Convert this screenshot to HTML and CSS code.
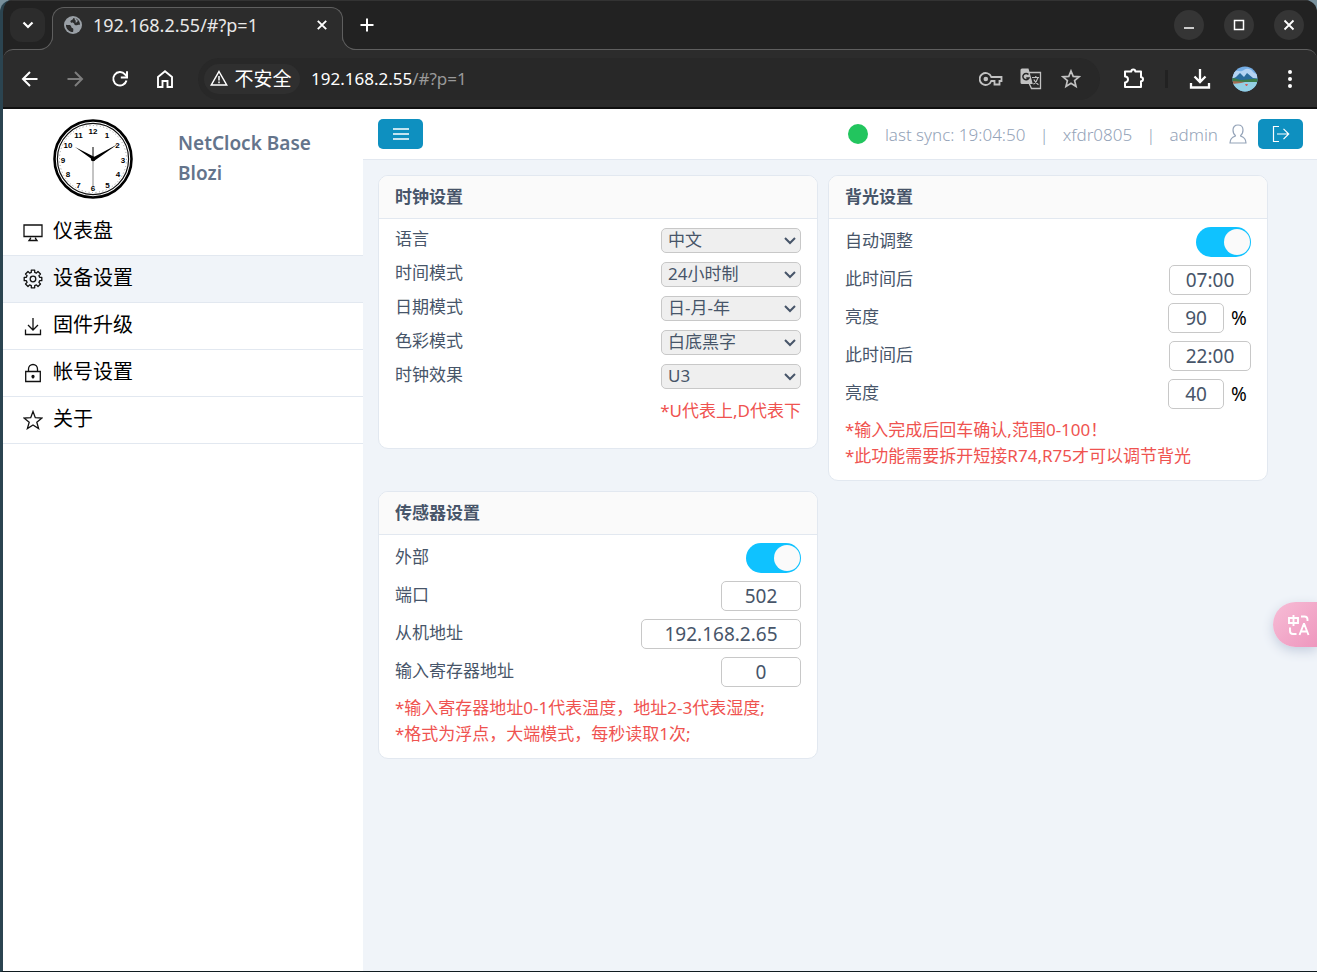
FILE: index.html
```html
<!DOCTYPE html>
<html lang="zh-CN">
<head>
<meta charset="utf-8">
<title>NetClock Base</title>
<link rel="stylesheet" href="styles.css">
</head>
<body>
<div class="window">
  <header class="tabstrip">
    <button class="tab-search" aria-label="搜索标签页"><svg width="12" height="8" viewBox="0 0 12 8"><path d="M1.500 1.500 6 6l4.500-4.500" fill="none" stroke="#fff" stroke-width="2.200"/></svg></button>
    <div class="tab">
      <svg width="18" height="18" viewBox="0 0 18 18"><circle cx="9" cy="9" r="9" fill="#9aa0a6"/><path d="M2 8.700c2 .7 3.400-.2 4.600.9 1.100 1 .2 1.900 1.600 2.300 1.100.3 1.300 1 1.100 2.100-.1.700-.1 1.400-.2 2C5 16 1.700 12.600 2 8.700zM9.600 2c-1.200.9-.6 1.700-1.900 2.100-1.400.4-1.700 1.300-.8 2.400.8.900 2.600 0 3.200 1 .5.900.3 1.700 1.500 1.800 1.600.2 2.300-.7 4.400-.5C16 4.800 13.200 2.100 9.600 2z" fill="#2c2c2c"/><path d="M10.800 2.300c.8.700.6 1.700 1.600 2 .9.300.5 1.500-.8 1.600" fill="none" stroke="#9aa0a6" stroke-width="1.500"/></svg>
      <span class="tab-title">192.168.2.55/#?p=1</span>
      <button class="tab-close" aria-label="关闭标签页"><svg width="10" height="10" viewBox="0 0 10 10"><path d="M.8.800l8.400 8.400M9.200.8.800 9.200" stroke="#fff" stroke-width="1.900"/></svg></button>
    </div>
    <button class="new-tab" aria-label="新标签页"><svg width="14" height="14" viewBox="0 0 14 14"><path d="M7 .5v13M.5 7h13" stroke="#fff" stroke-width="2"/></svg></button>
    <div class="controls">
      <button aria-label="最小化"><svg width="12" height="12" viewBox="0 0 12 12"><path d="M1 9h10" stroke="#fff" stroke-width="1.500"/></svg></button>
      <button aria-label="最大化"><svg width="12" height="12" viewBox="0 0 12 12"><path d="M1.500 1.500h9v9h-9z" fill="none" stroke="#fff" stroke-width="1.500"/></svg></button>
      <button aria-label="关闭"><svg width="12" height="12" viewBox="0 0 12 12"><path d="m1.500 1.500 9 9m0-9-9 9" stroke="#fff" stroke-width="1.800"/></svg></button>
    </div>
  </header>

  <nav class="toolbar">
    <button aria-label="后退"><svg width="18" height="18" viewBox="0 0 18 18"><path d="M16.500 9H2.500M9 2 2 9l7 7" fill="none" stroke="#fff" stroke-width="2"/></svg></button>
    <button aria-label="前进"><svg width="18" height="18" viewBox="0 0 18 18"><path d="M1.500 9h14M9 2l7 7-7 7" fill="none" stroke="#7d7d7d" stroke-width="2"/></svg></button>
    <button aria-label="重新加载"><svg width="18" height="18" viewBox="0 0 18 18"><path d="M15.500 10.500A6.700 6.700 0 1 1 14 4.300l1.500 1.700" fill="none" stroke="#fff" stroke-width="2"/><path d="M16 1.200v6.300H9.800" fill="none" stroke="#fff" stroke-width="2"/></svg></button>
    <button aria-label="主页"><svg width="18" height="20" viewBox="0 0 18 20"><path d="M2 8 9 2.300 16 8v10h-4.500v-6h-5v6H2z" fill="none" stroke="#fff" stroke-width="1.900"/></svg></button>
    <div class="urlbar">
      <button class="chip"><svg width="18" height="16" viewBox="0 0 18 16"><path d="M9 1.500 16.700 15H1.300z" fill="none" stroke="#fff" stroke-width="1.500"/><path d="M9 6v4.500M9 11.500v1.800" stroke="#fff" stroke-width="1.500"/></svg>不安全</button>
      <span class="url">192.168.2.55<span class="dim">/#?p=1</span></span>
      <button aria-label="密码"><svg width="24" height="14" viewBox="0 0 24 14"><path d="M12.300 5A6 6 0 1 0 12.300 9H15.500v3.500h5V9h2V5z" fill="none" stroke="#c2c2c2" stroke-width="1.800"/><circle cx="6.800" cy="7" r="2.300" fill="#c2c2c2"/></svg></button>
      <button aria-label="翻译"><svg width="22" height="22" viewBox="0 0 22 22"><path d="M9 4.500h11.500v16h-9L9 15" fill="none" stroke="#c2c2c2" stroke-width="1.300"/><path d="M2 .5h6.500l4.300 15.500H2A1.500 1.500 0 0 1 .5 14.500V2A1.500 1.500 0 0 1 2 .5z" fill="#c2c2c2"/><path d="M8.500 6.500a3.200 3.200 0 1 0 .4 3.600H6.200" fill="none" stroke="#282828" stroke-width="1.500"/><path d="M12 9.500h7M15.800 8v1.500M18 9.700c-.8 3-2.700 5.300-4.500 6.500M13.800 11.500c1.200 2.300 2.700 4 4.700 5.300" fill="none" stroke="#c2c2c2" stroke-width="1.200"/></svg></button>
      <button aria-label="收藏"><svg width="20" height="20" viewBox="0 0 20 20"><path d="m10 2 2.200 5.400 5.900.4-4.500 3.800 1.400 5.800-5-3.200-5 3.200 1.400-5.800-4.500-3.800 5.900-.4z" fill="none" stroke="#c2c2c2" stroke-width="1.700"/></svg></button>
    </div>
    <button aria-label="扩展程序"><svg width="22" height="22" viewBox="0 0 22 22"><path d="M2 3.500h6.300a2 2 0 0 1 4 0H18v5.800a2 2 0 0 1 0 4V19H2v-4.600a3 3 0 0 0 0-6z" fill="none" stroke="#fff" stroke-width="2" stroke-linejoin="round"/></svg></button>
    <span class="divider"></span>
    <button aria-label="下载"><svg width="22" height="22" viewBox="0 0 22 22"><path d="M11 1v12.500M5.500 8.500 11 14l5.500-5.500M2 15v4.500h18V15" fill="none" stroke="#fff" stroke-width="2.300"/></svg></button>
    <button aria-label="个人资料"><svg width="26" height="26" viewBox="0 0 26 26"><defs><clipPath id="av"><circle cx="13" cy="13" r="12.500"/></clipPath></defs><g clip-path="url(#av)"><path d="M0 0h26v26H0z" fill="#75aee6"/><path d="M2 6c3-3 5 0 8-1s3-3 7-2 3 4 8 5v4H0z" fill="#b4d3f3"/><path d="m0 13 4-2 4-4 4 4 3-4 6 5 5 1v4H0z" fill="#2b6c9c"/><path d="M0 12c4 0 6 2 10 2s11-2 16-1v3H0z" fill="#3b7c4a"/><path d="M0 16h26v10H0z" fill="#93d0e4"/><path d="m0 15 13 1-4 1-9 1z" fill="#a56b50"/><path d="M13 18h3l-1 2h-1z" fill="#d0605b"/></g></svg></button>
    <button aria-label="菜单"><svg width="6" height="20" viewBox="0 0 6 20"><g fill="#fff"><circle cx="3" cy="3" r="2"/><circle cx="3" cy="10" r="2"/><circle cx="3" cy="17" r="2"/></g></svg></button>
  </nav>

  <div class="app">
    <aside class="sidebar">
      <div class="brand">
        <svg class="clock" width="80" height="80" viewBox="0 0 80 80">
          <circle cx="40" cy="40" r="38.500" fill="#fff" stroke="#000" stroke-width="2.600"/>
          <circle cx="40" cy="40" r="35.600" fill="none" stroke="#111" stroke-width="1.200"/>
          <circle cx="40" cy="40" r="33.500" fill="none" stroke="#999" stroke-width="1" stroke-dasharray="1 2.500"/>
          <g class="numerals"><text x="40" y="15">12</text><text x="54" y="19">1</text><text x="64.500" y="29">2</text><text x="70" y="44">3</text><text x="65" y="58">4</text><text x="54.500" y="69">5</text><text x="40" y="72">6</text><text x="25.500" y="69">7</text><text x="15" y="58">8</text><text x="10" y="44">9</text><text x="15" y="29">10</text><text x="25.500" y="19">11</text></g>
          <path d="M40 28v10" stroke="#000" stroke-width="1"/><path d="M40 40v27" stroke="#888" stroke-width="1"/>
          <path d="m22 28 19.500 10-1.500 3zM65 25 41 42l-2-3z"/><circle cx="40" cy="40" r="2.200"/>
        </svg>
        <h1>NetClock Base<br>Blozi</h1>
      </div>
      <nav class="menu">
        <a href="#0"><svg width="20" height="20" viewBox="0 0 20 20"><path d="M1 3h18v11.500H1z"/><path d="M7.500 15.500v1L6 18.500h8l-1.500-2v-1"/></svg>仪表盘</a>
        <a href="#1" class="active"><svg width="20" height="20" viewBox="0 0 20 20"><path d="M8.300 1.200h3.400v2.200l1.700.7L15 2.500 17.500 5l-1.600 1.600.7 1.700h2.200v3.400h-2.200l-.7 1.700 1.600 1.600-2.500 2.500-1.600-1.600-1.700.7v2.200H8.300v-2.200l-1.700-.7L5 17.500 2.500 15l1.600-1.600-.7-1.700H1.200V8.300h2.200l.7-1.700L2.500 5 5 2.500l1.600 1.600 1.700-.7z" stroke-linejoin="round"/><circle cx="10" cy="10" r="2.800"/></svg>设备设置</a>
        <a href="#2"><svg width="20" height="20" viewBox="0 0 20 20"><path d="M10 2v12M5 9l5 5 5-5M2.500 13.500v5h15v-5"/></svg>固件升级</a>
        <a href="#3"><svg width="20" height="20" viewBox="0 0 20 20"><path d="M2.700 8.500h14.600v10H2.700zM5.500 8.500V6a4.500 4.500 0 0 1 9 0v2.500"/><circle cx="10" cy="13.500" r="1" fill="#000"/><path d="M10 12v3.500"/></svg>帐号设置</a>
        <a href="#4"><svg width="20" height="20" viewBox="0 0 20 20"><path d="m10 1.500 2.300 6.200 6.700.3-5.200 4.200 1.800 6.400-5.600-3.600-5.600 3.600 1.800-6.400L1 8l6.700-.3z"/></svg>关于</a>
      </nav>
    </aside>

    <main class="main">
      <div class="topbar">
        <button class="btn" aria-label="切换菜单"><svg width="16" height="14" viewBox="0 0 16 14"><path d="M0 2h16M0 7h16M0 12h16" stroke="#fff" stroke-width="1.300"/></svg></button>
        <div class="status">
          <span class="dot"></span>
          <span>last sync: 19:04:50</span><span>|</span><span>xfdr0805</span><span>|</span>
          <span class="user">admin<svg width="18" height="20" viewBox="0 0 18 20"><path d="M6.800 12C4.500 10.500 4 8.500 4 6c0-3 2-5 5-5s5 2 5 5c0 2.500-.5 4.500-2.800 6M6.800 12C3 13 1 14.500 1 19h16c0-4.500-2-6-5.800-7" fill="none" stroke="#94a3b8" stroke-width="1.200"/></svg></span>
        </div>
        <button class="btn" aria-label="退出登录"><svg width="18" height="18" viewBox="0 0 18 18"><path d="M7 1.500H1.500v15H7M5 9h11.500M11.500 3.800 16.700 9l-5.200 5.200" fill="none" stroke="#fff" stroke-width="1.200"/></svg></button>
      </div>

      <div class="cards">
        <section class="card">
          <h2>时钟设置</h2>
          <div class="body compact">
            <div class="row"><label for="lang">语言</label><select id="lang"><option>中文</option></select></div>
            <div class="row"><label for="hour">时间模式</label><select id="hour"><option>24小时制</option></select></div>
            <div class="row"><label for="date">日期模式</label><select id="date"><option>日-月-年</option></select></div>
            <div class="row"><label for="color">色彩模式</label><select id="color"><option>白底黑字</option></select></div>
            <div class="row"><label for="effect">时钟效果</label><select id="effect"><option>U3</option></select></div>
            <p class="note right">*U代表上,D代表下</p>
          </div>
        </section>

        <section class="card">
          <h2>背光设置</h2>
          <div class="body">
            <div class="row"><label for="auto">自动调整</label><input class="switch" id="auto" type="checkbox" checked></div>
            <div class="row"><label for="t1">此时间后</label><input class="field time" id="t1" type="text" value="07:00"></div>
            <div class="row"><label for="b1">亮度</label><span class="percent"><input class="field short" id="b1" type="text" value="90">%</span></div>
            <div class="row"><label for="t2">此时间后</label><input class="field time" id="t2" type="text" value="22:00"></div>
            <div class="row"><label for="b2">亮度</label><span class="percent"><input class="field short" id="b2" type="text" value="40">%</span></div>
            <p class="note">*输入完成后回车确认,范围0-100！<br>*此功能需要拆开短接R74,R75才可以调节背光</p>
          </div>
        </section>

        <section class="card">
          <h2>传感器设置</h2>
          <div class="body">
            <div class="row"><label for="ext">外部</label><input class="switch" id="ext" type="checkbox" checked></div>
            <div class="row"><label for="port">端口</label><input class="field number" id="port" type="text" value="502"></div>
            <div class="row"><label for="host">从机地址</label><input class="field long" id="host" type="text" value="192.168.2.65"></div>
            <div class="row"><label for="reg">输入寄存器地址</label><input class="field number" id="reg" type="text" value="0"></div>
            <p class="note">*输入寄存器地址0-1代表温度，地址2-3代表湿度;<br>*格式为浮点，大端模式，每秒读取1次;</p>
          </div>
        </section>
      </div>
    </main>
  </div>
  <button class="translate" aria-label="翻译网页"><svg width="22" height="22" viewBox="0 0 22 22"><path d="M1 4h9v5H1zM5.500 1v11M13 2.500h3.500q3 0 3 3V7M2 13.500V17q0 3 3 3h3.500M11.500 21l4.300-11h.4l4.300 11M13 17.500h6" fill="none" stroke="#fff" stroke-width="1.900"/></svg></button>
</div>
</body>
</html>
```
FILE: styles.css
```css
* { box-sizing: border-box; }

body {
  margin: 0;
  background: #78909c;
  font-family: "Noto Sans", "Noto Sans CJK SC", sans-serif;
}

button {
  display: flex;
  align-items: center;
  justify-content: center;
  padding: 0;
  border: 0;
  background: none;
  font: inherit;
  color: inherit;
}

.window {
  position: relative;
  display: flex;
  flex-direction: column;
  min-height: 100vh;
  border-left: 3px solid #2b4450;
  border-bottom: 1px solid #101b20;
  border-radius: 12px 12px 0 0;
  background: #222;
  overflow: hidden;
}

/* Browser frame */
.tabstrip {
  display: flex;
  align-items: center;
  height: 49px;
  padding: 0 13px 0 7px;
  border-top: 1px solid #333;
  color: #e8e8e8;
}

.tab-search {
  width: 35px;
  height: 34px;
  border-radius: 12px;
  background: #2c2c2c;
}

.tab {
  position: relative;
  z-index: 1;
  display: flex;
  align-items: center;
  align-self: flex-end;
  width: 291px;
  height: 43px;
  margin: 0 0 -1px 7px;
  padding: 0 10px 8px 11px;
  border: 1px solid #5f5f5f;
  border-bottom: 0;
  border-radius: 12px 12px 0 0;
  background: #2c2c2c;
  font-size: 18px;
}

.tab::before,
.tab::after {
  content: "";
  position: absolute;
  bottom: 0;
  width: 16px;
  height: 16px;
  border-bottom: 1px solid #5f5f5f;
}

.tab::before {
  right: 100%;
  border-right: 1px solid #5f5f5f;
  border-radius: 0 0 14px 0;
  box-shadow: 4px 4px 0 #2c2c2c;
  clip-path: inset(0 -1px 0 0);
}

.tab::after {
  left: 100%;
  border-left: 1px solid #5f5f5f;
  border-radius: 0 0 0 14px;
  box-shadow: -4px 4px 0 #2c2c2c;
  clip-path: inset(0 0 0 -1px);
}

.tab-title { flex: 1; margin-left: 11px; }
.tab-close { width: 20px; height: 20px; }
.new-tab { width: 30px; height: 30px; margin-left: 9px; }

.controls { display: flex; gap: 20px; margin-left: auto; }
.controls button {
  width: 30px;
  height: 30px;
  border-radius: 50%;
  background: #353535;
}

.toolbar {
  display: flex;
  align-items: center;
  height: 60px;
  padding: 0 5px 0 4px;
  border-top: 1px solid #5f5f5f;
  border-bottom: 2px solid #111;
  border-radius: 10px 10px 0 0;
  background: #2c2c2c;
  color: #fff;
}

.toolbar > button { width: 45px; height: 40px; }

.urlbar {
  display: flex;
  flex: 1;
  align-items: center;
  height: 42px;
  margin: 0 11px;
  padding: 0 9px 0 6px;
  border-radius: 21px;
  background: #282828;
  font-size: 17px;
}

.urlbar > button { width: 40px; height: 30px; }

.urlbar .chip {
  gap: 6px;
  width: 96px;
  padding: 0 2px 2px 0;
  border-radius: 15px;
  background: #2f2f2f;
  font-size: 19px;
  white-space: nowrap;
}

.url { flex: 1; margin-left: 11px; }
.dim { color: #999; }

.divider { width: 3px; height: 18px; margin: 0 9px; background: #222; }

/* Application */
.app { display: flex; flex: 1; background: #f0f4f9; }

.sidebar { width: 360px; background: #fff; }

.brand { display: flex; height: 100px; padding: 10px 0 0 50px; }

h1 {
  margin: 9px 0 0 45px;
  color: #64748b;
  font-size: 19px;
  font-weight: 600;
  line-height: 30px;
}

.numerals {
  font-family: "Liberation Sans", sans-serif;
  font-size: 8px;
  font-weight: 700;
  text-anchor: middle;
}

.menu a {
  display: flex;
  align-items: center;
  gap: 10px;
  height: 47px;
  padding: 0 20px 2px;
  border-bottom: 1px solid #e2e8f0;
  color: #000;
  font-size: 20px;
  line-height: 30px;
  text-decoration: none;
}

.menu a.active { background: #f0f4f9; }
.menu svg { margin-top: 2px; fill: none; stroke: #111; stroke-width: 1.300; }

.main { flex: 1; min-width: 0; }

.topbar {
  display: flex;
  align-items: center;
  justify-content: space-between;
  height: 51px;
  padding: 0 14px 0 15px;
  border-bottom: 1px solid #e2e8f0;
  background: #fff;
}

.btn {
  width: 45px;
  height: 30px;
  border-radius: 5px;
  background: #0e90c0;
}

.status {
  display: flex;
  align-items: center;
  gap: 14px;
  margin: 0 11px 0 auto;
  color: #94a3b8;
  font-size: 17px;
  font-weight: 300;
}

.user { display: flex; align-items: center; gap: 11px; }
.dot { width: 20px; height: 20px; margin-right: 3px; border-radius: 50%; background: #22c55e; }

.cards {
  display: grid;
  grid-template-columns: repeat(2, minmax(0, 440px));
  gap: 10px;
  align-items: start;
  padding: 15px;
}

.card {
  border: 1px solid #e2e8f0;
  border-radius: 10px;
  background: #fff;
  color: #475569;
  font-size: 17px;
  overflow: hidden;
}

h2 {
  margin: 0;
  padding: 8px 16px;
  border-bottom: 1px solid #e2e8f0;
  background: #fafafa;
  font-size: 17px;
  font-weight: 700;
  line-height: 26px;
}

.body { display: grid; gap: 8px; padding: 8px 16px 11px; }
.compact { gap: 9px; padding: 9px 16px 24px; }

.row {
  display: flex;
  align-items: center;
  justify-content: space-between;
  line-height: 25px;
}

.row label { padding-bottom: 3px; line-height: 22px; }

select {
  width: 140px;
  height: 25px;
  padding: 0 24px 1px 6px;
  border: 1px solid #c8c8c8;
  border-radius: 5px;
  background: #efefef url("data:image/svg+xml,%3Csvg xmlns='http://www.w3.org/2000/svg' width='12' height='8'%3E%3Cpath d='M1 1l5 5 5-5' fill='none' stroke='%23475569' stroke-width='2'/%3E%3C/svg%3E") no-repeat right 4px center;
  color: #475569;
  font: inherit;
  line-height: 22px;
  appearance: none;
}

.field {
  height: 30px;
  padding: 0;
  border: 1px solid #c8c8c8;
  border-radius: 5px;
  background: #fff;
  color: #475569;
  font-family: inherit;
  font-size: 19px;
  text-align: center;
}

.time { width: 82px; }
.number { width: 80px; }
.short { width: 56px; }
.long { width: 160px; }

.percent {
  display: flex;
  align-items: center;
  gap: 7px;
  width: 83px;
  color: #000;
  font-size: 19px;
}

.switch {
  display: flex;
  align-items: center;
  justify-content: flex-end;
  width: 55px;
  height: 30px;
  margin: 0;
  padding: 0 1px;
  border-radius: 15px;
  background: #0fc2ff;
  appearance: none;
}

.switch::before {
  content: "";
  width: 26px;
  height: 26px;
  border-radius: 50%;
  background: #fafafa;
}

.note { margin: 0; color: #ef5350; line-height: 26px; }
.right { text-align: right; }

.translate {
  position: absolute;
  top: 602px;
  right: 0;
  width: 44px;
  height: 45px;
  padding-left: 8px;
  border-radius: 23px 0 0 23px;
  background: linear-gradient(135deg, #f7bdd6, #ee97be);
  box-shadow: 0 4px 12px #c5cede;
}
```
